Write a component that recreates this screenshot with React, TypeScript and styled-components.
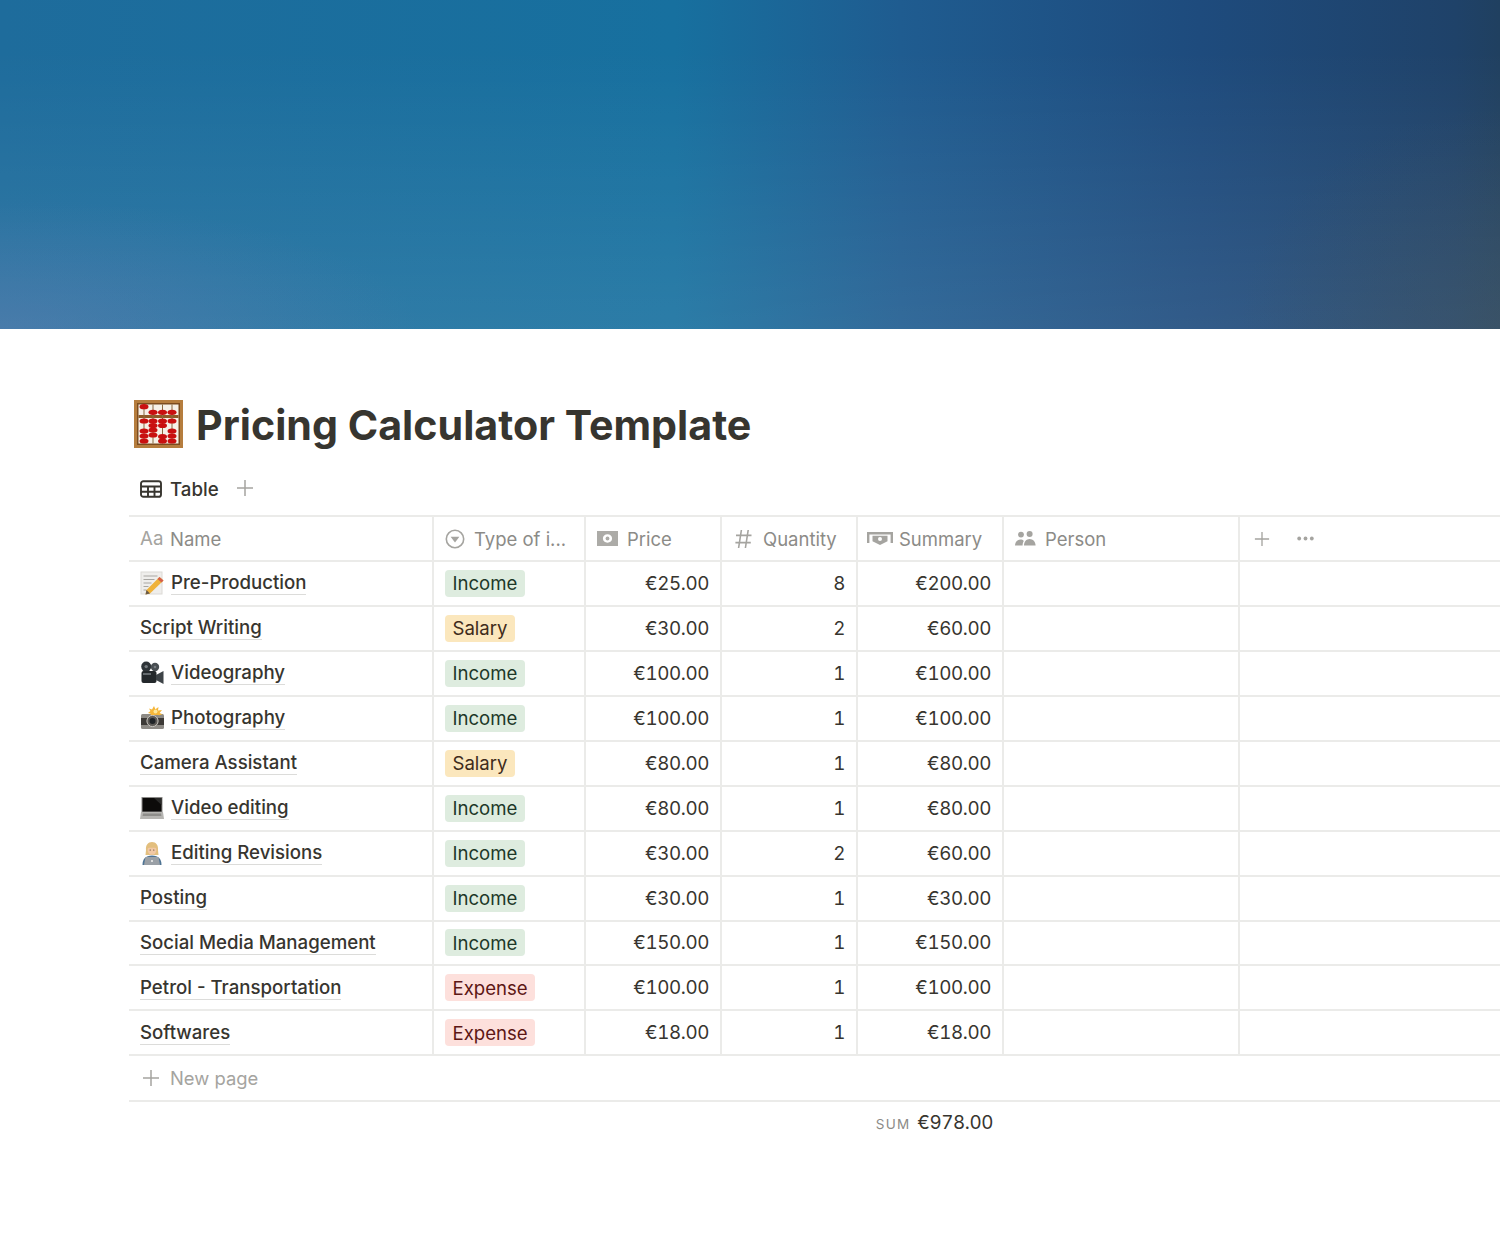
import React from 'react'
import styled, { createGlobalStyle } from 'styled-components'

const GlobalStyle = createGlobalStyle`
  html, body {
    margin: 0;
    padding: 0;
    background: #fff;
  }
  body {
    font-family: Inter, "Noto Sans", "Liberation Sans", sans-serif;
    color: #37352f;
    overflow: hidden;
  }
  * {
    box-sizing: border-box;
  }
`

const COLUMNS = '305px 152px 136px 136px 146px 236px 1fr'
const LINE = '#ebebe9'

const Page = styled.div`
  width: 1500px;
  height: 1249px;
  overflow: hidden;
`

const Cover = styled.div`
  height: 329px;
  background:
    radial-gradient(ellipse 420px 130px at 0% 100%, rgba(104, 126, 178, 0.42), transparent),
    radial-gradient(ellipse 260px 220px at 100% 100%, rgba(66, 84, 92, 0.4), transparent),
    linear-gradient(to bottom, rgba(255, 255, 255, 0) 15%, rgba(255, 255, 255, 0.09) 100%),
    linear-gradient(to right, #1e6c9c 0%, #17709f 45%, #1f5c90 60%, #1e4b7d 80%, #1f4269 97%, #204060 100%);
`

const Content = styled.div`
  padding: 66px 0 0 129px;
`

const TitleRow = styled.div`
  display: flex;
  align-items: center;
  gap: 13px;
  height: 60px;
  padding-left: 5px;
`

const EmojiBox = styled.span`
  display: flex;
  margin-bottom: 3px;
`

const Title = styled.h1`
  margin: 0;
  font-size: 41.2px;
  line-height: 60px;
  font-weight: 700;
  color: #37352f;
`

const TabBar = styled.div`
  display: flex;
  align-items: center;
  height: 60px;
  padding: 8px 0 0 11px;
`

const TabLabel = styled.span`
  margin-left: 8px;
  font-size: 18.7px;
  font-weight: 500;
  color: #37352f;
`

const TabAdd = styled.span`
  display: flex;
  margin-left: 17px;
  margin-top: -3px;
`

const Row = styled.div`
  display: grid;
  grid-template-columns: ${COLUMNS};
  height: 44.95px;
  border-bottom: 2px solid ${LINE};
`

const HeaderRow = styled(Row)`
  height: 47px;
  border-top: 2px solid ${LINE};
`

const HeadCell = styled.div<{ $tight?: boolean }>`
  display: flex;
  align-items: center;
  gap: ${({ $tight }) => ($tight ? 6 : 9)}px;
  padding-left: ${({ $tight }) => ($tight ? 9 : 11)}px;
  font-size: 18.5px;
  color: #8c8b87;
  border-right: 2px solid ${LINE};
`

const ActionsCell = styled.div`
  display: flex;
  align-items: center;
  gap: 27px;
  padding-left: 14px;
`

const IconSlot = styled.span<{ $width?: number }>`
  display: flex;
  flex: none;
  align-items: center;
  justify-content: center;
  width: ${({ $width }) => ($width ? `${$width}px` : 'auto')};
`

const NameCell = styled.div`
  display: flex;
  align-items: center;
  gap: 7px;
  padding-left: 11px;
  border-right: 2px solid ${LINE};
`

const NameText = styled.span`
  font-size: 18.65px;
  font-weight: 500;
  line-height: 23px;
  color: #37352f;
  border-bottom: 1px solid #dcdcda;
`

const TagCell = styled.div`
  display: flex;
  align-items: center;
  padding-left: 11px;
  border-right: 2px solid ${LINE};
`

const tagColors = {
  Income: { bg: '#deecdf', fg: '#1d3829' },
  Salary: { bg: '#fbe7bd', fg: '#402c1b' },
  Expense: { bg: '#fde0dc', fg: '#5d1715' },
}

type TagKind = keyof typeof tagColors

const Tag = styled.span<{ $kind: TagKind }>`
  display: inline-flex;
  align-items: center;
  height: 27px;
  padding: 0 7.5px;
  border-radius: 4px;
  font-size: 18.6px;
  background: ${({ $kind }) => tagColors[$kind].bg};
  color: ${({ $kind }) => tagColors[$kind].fg};
`

const NumberCell = styled.div`
  display: flex;
  align-items: center;
  justify-content: flex-end;
  padding-right: 11px;
  font-size: 18.8px;
  letter-spacing: -0.4px;
  font-variant-numeric: tabular-nums;
  color: #37352f;
  border-right: 2px solid ${LINE};
`

const EmptyCell = styled.div<{ $last?: boolean }>`
  border-right: ${({ $last }) => ($last ? 'none' : `2px solid ${LINE}`)};
`

const NewPageRow = styled.div`
  display: flex;
  align-items: center;
  gap: 10px;
  height: 46px;
  padding-left: 13px;
  font-size: 18.4px;
  color: #a5a4a0;
  border-bottom: 2px solid ${LINE};
`

const SumRow = styled.div`
  display: flex;
  align-items: baseline;
  justify-content: flex-end;
  gap: 7px;
  width: 864px;
  padding-top: 9px;
`

const SumLabel = styled.span`
  font-size: 13.5px;
  letter-spacing: 1.2px;
  color: #8c8b87;
`

const SumValue = styled.span`
  font-size: 18.8px;
  letter-spacing: -0.4px;
  font-variant-numeric: tabular-nums;
  color: #37352f;
`

const TextIcon = styled.span`
  font-size: 18.7px;
  color: #a5a4a0;
  width: 21px;
`

const PlusIcon = ({ size = 18, color = '#a5a4a0' }: { size?: number; color?: string }) => (
  <svg width={size} height={size} viewBox="0 0 18 18" fill="none" stroke={color} strokeWidth="1.5">
    <path d="M9 1v16M1 9h16" />
  </svg>
)

const TableIcon = () => (
  <svg width="22" height="18" viewBox="0 0 22 18" fill="none" stroke="#37352f" strokeWidth="1.9">
    <rect x="1" y="1.200" width="20" height="15.600" rx="2.400" />
    <path d="M1 6.500h20M1 11.700h20M8 6.500v10M14.500 6.500v10" />
  </svg>
)

const SelectIcon = () => (
  <svg width="20" height="20" viewBox="0 0 20 20" fill="none">
    <circle cx="10" cy="10" r="8.700" stroke="#a5a4a0" strokeWidth="1.600" />
    <path d="M5.600 7.800h8.800L10 13.600z" fill="#a5a4a0" />
  </svg>
)

const PriceIcon = () => (
  <svg width="21" height="15" viewBox="0 0 21 15">
    <path
      fillRule="evenodd"
      fill="#acaba7"
      d="M0 0h21v15H0zM10.500 3.300c-2.600 0-4.600 1.900-4.600 4.200s2 4.200 4.600 4.200 4.600-1.900 4.600-4.200-2-4.200-4.600-4.200z"
    />
    <circle cx="10.500" cy="7.500" r="1.900" fill="#acaba7" />
  </svg>
)

const HashIcon = () => (
  <svg width="17" height="20" viewBox="0 0 17 20" fill="none" stroke="#a5a4a0" strokeWidth="1.600">
    <path d="M6.400 1 3.600 19M13.200 1l-2.800 18M1 6.400h15.500M.4 13.600h15.400" />
  </svg>
)

const SummaryIcon = () => (
  <svg width="26" height="14" viewBox="0 0 26 14">
    <path fill="#a5a4a0" d="M0 0h26v2.400H0zM0 2h2.400v9H0zM23.600 2H26v9h-2.400z" />
    <path
      fillRule="evenodd"
      fill="#a5a4a0"
      d="M5.500 3.800h15v5.400L13 13 5.500 9.200zM13 5a2 2 0 1 0 0 4 2 2 0 0 0 0-4z"
    />
  </svg>
)

const PersonIcon = () => (
  <svg width="21" height="15" viewBox="0 0 21 15" fill="#a5a4a0">
    <circle cx="6" cy="3.600" r="2.900" />
    <circle cx="14.600" cy="3" r="3" />
    <path d="M0 14.600c0-3.600 2.400-6 5.400-6 1.500 0 2.600.5 3.400 1.300-.8 1.200-1.200 2.800-1.200 4.700zM9 14.600c0-3.800 2.400-6.600 5.600-6.600s6 2.800 6 6.600z" />
  </svg>
)

const DotsIcon = () => (
  <svg width="17" height="5" viewBox="0 0 17 5" fill="#a5a4a0">
    <circle cx="2.200" cy="2.500" r="1.900" />
    <circle cx="8.500" cy="2.500" r="1.900" />
    <circle cx="14.800" cy="2.500" r="1.900" />
  </svg>
)

const RODS = [10, 19, 28.5, 38]

// [rod index, bead y] for each red bead of the abacus
const BEADS: [number, number][] = [
  [0, 6.700], [1, 12.300], [2, 12.300], [3, 12.300],
  [0, 21], [1, 21], [2, 21], [3, 21],
  [1, 25.500], [2, 25.500],
  [0, 31], [1, 30], [3, 31],
  [0, 36], [1, 35], [2, 36.500], [3, 36],
  [0, 41], [2, 41], [3, 41],
]

const AbacusEmoji = () => (
  <svg width="49" height="48" viewBox="0 0 49 48">
    <rect width="49" height="48" fill="#b57d3e" />
    <rect x="3" y="3" width="43" height="42" fill="#7c4c1f" />
    <rect x="4.500" y="4.500" width="40" height="39" fill="#f6f1e8" />
    <rect x="4.500" y="15" width="40" height="3" fill="#8e5a26" />
    {RODS.map((x) => (
      <rect key={x} x={x - 0.5} y="4.500" width="1" height="39" fill="#8a6a40" />
    ))}
    {BEADS.map(([rod, y]) => (
      <ellipse key={`${rod}-${y}`} cx={RODS[rod]} cy={y} rx="4.500" ry="2.600" fill="#c91010" />
    ))}
  </svg>
)

const MemoEmoji = () => (
  <svg width="24" height="24" viewBox="0 0 24 24">
    <rect x="1" y="1" width="21" height="22" fill="#efeeec" stroke="#dcdad6" />
    <path d="M3.500 5h14M3.500 8.500h11M3.500 12h8M3.500 15.500h5M3.500 19h3" stroke="#a8a6a2" strokeWidth="1" />
    <path d="M19.500 6 23.500 9.500 10 22.500l-4.500 1 1-4.500z" fill="#efb23a" />
    <path d="M19.500 6 23.500 9.500l-2 2-4-3.500z" fill="#d5604a" />
    <path d="M6.500 19l3.500 3.500-4.500 1z" fill="#6a5a48" />
  </svg>
)

const MovieCameraEmoji = () => (
  <svg width="24" height="24" viewBox="0 0 24 24">
    <circle cx="6.200" cy="5.600" r="5" fill="#2e3438" />
    <circle cx="15" cy="6" r="4.200" fill="#484e52" />
    <circle cx="6.200" cy="5.600" r="1.700" fill="#767c80" />
    <circle cx="15" cy="6" r="1.300" fill="#767c80" />
    <rect x="1.500" y="10" width="15" height="12" rx="2" fill="#23282b" />
    <path d="M16 14l7.500-4v13L16 19z" fill="#3d4347" />
    <rect x="3" y="12" width="8" height="2" fill="#646a6e" />
  </svg>
)

const FlashCameraEmoji = () => (
  <svg width="24" height="24" viewBox="0 0 24 24">
    <rect x="1" y="8" width="23" height="15" rx="1.500" fill="#8d8a85" />
    <rect x="1" y="12" width="23" height="7" fill="#3d3a37" />
    <circle cx="12.500" cy="15" r="5.600" fill="#5d5a56" stroke="#c9c6c0" strokeWidth="1" />
    <circle cx="12.500" cy="15" r="3" fill="#1f2327" />
    <path d="M14 0l1.400 3.200L18.500.9l-.5 3.600 4-.6-2.400 3 3 1.400-3.400 1-1.200-.3H11l-.8-1.400L8 7l2.400-2L9 2.400l3 1z" fill="#f5b63a" />
    <circle cx="15.500" cy="5.500" r="2" fill="#fde79a" />
  </svg>
)

const LaptopEmoji = () => (
  <svg width="24" height="24" viewBox="0 0 24 24">
    <path d="M1.500 1h21v15h-21z" fill="#8b8a88" />
    <path d="M2.500 2h19v13.500h-19z" fill="#0c0b0a" />
    <path d="M14 2h7.500v7z" fill="#2a2a29" />
    <path d="M1 16h22l1 7H0z" fill="#b6b5b2" />
    <path d="M3 17.500h18l.4 2.600H2.600z" fill="#8e8d8a" />
  </svg>
)

const TechnologistEmoji = () => (
  <svg width="24" height="24" viewBox="0 0 24 24">
    <path d="M6 9c-.5-5 2-8 6-8s6.500 3 6 8l.5 5h-13z" fill="#e3bf7e" />
    <ellipse cx="12" cy="9" rx="4.400" ry="4.800" fill="#f2c9a5" />
    <path d="M7.200 7c2-.3 6.500-.3 9.600 0 0-3-2-4.500-4.800-4.500S7.200 4 7.200 7z" fill="#e3bf7e" />
    <circle cx="10.200" cy="9" r=".6" fill="#4a3526" />
    <circle cx="13.800" cy="9" r=".6" fill="#4a3526" />
    <path d="M2.500 24c0-6 3-9.500 9.500-9.500s9.500 3.500 9.500 9.500z" fill="#4f7494" />
    <path d="M5.500 16h13l1.500 8H4z" fill="#9aa0a6" />
    <circle cx="12" cy="20" r="1" fill="#f0f0ee" />
  </svg>
)

type Item = {
  name: string
  emoji?: React.ReactNode
  kind: TagKind
  price: string
  quantity: number
  summary: string
}

const items: Item[] = [
  { name: 'Pre-Production', emoji: <MemoEmoji />, kind: 'Income', price: '€25.00', quantity: 8, summary: '€200.00' },
  { name: 'Script Writing', kind: 'Salary', price: '€30.00', quantity: 2, summary: '€60.00' },
  { name: 'Videography', emoji: <MovieCameraEmoji />, kind: 'Income', price: '€100.00', quantity: 1, summary: '€100.00' },
  { name: 'Photography', emoji: <FlashCameraEmoji />, kind: 'Income', price: '€100.00', quantity: 1, summary: '€100.00' },
  { name: 'Camera Assistant', kind: 'Salary', price: '€80.00', quantity: 1, summary: '€80.00' },
  { name: 'Video editing', emoji: <LaptopEmoji />, kind: 'Income', price: '€80.00', quantity: 1, summary: '€80.00' },
  { name: 'Editing Revisions', emoji: <TechnologistEmoji />, kind: 'Income', price: '€30.00', quantity: 2, summary: '€60.00' },
  { name: 'Posting', kind: 'Income', price: '€30.00', quantity: 1, summary: '€30.00' },
  { name: 'Social Media Management', kind: 'Income', price: '€150.00', quantity: 1, summary: '€150.00' },
  { name: 'Petrol - Transportation', kind: 'Expense', price: '€100.00', quantity: 1, summary: '€100.00' },
  { name: 'Softwares', kind: 'Expense', price: '€18.00', quantity: 1, summary: '€18.00' },
]

const App = () => (
  <Page>
    <GlobalStyle />
    <Cover />
    <Content>
      <TitleRow>
        <EmojiBox>
          <AbacusEmoji />
        </EmojiBox>
        <Title>Pricing Calculator Template</Title>
      </TitleRow>
      <TabBar>
        <TableIcon />
        <TabLabel>Table</TabLabel>
        <TabAdd>
          <PlusIcon />
        </TabAdd>
      </TabBar>
      <HeaderRow>
        <HeadCell>
          <TextIcon>Aa</TextIcon>
          Name
        </HeadCell>
        <HeadCell>
          <IconSlot>
            <SelectIcon />
          </IconSlot>
          Type of i...
        </HeadCell>
        <HeadCell>
          <IconSlot>
            <PriceIcon />
          </IconSlot>
          Price
        </HeadCell>
        <HeadCell>
          <IconSlot $width={21}>
            <HashIcon />
          </IconSlot>
          Quantity
        </HeadCell>
        <HeadCell $tight>
          <IconSlot>
            <SummaryIcon />
          </IconSlot>
          Summary
        </HeadCell>
        <HeadCell>
          <IconSlot>
            <PersonIcon />
          </IconSlot>
          Person
        </HeadCell>
        <ActionsCell>
          <PlusIcon size={16} />
          <DotsIcon />
        </ActionsCell>
      </HeaderRow>
      {items.map((item) => (
        <Row key={item.name}>
          <NameCell>
            {item.emoji && <IconSlot>{item.emoji}</IconSlot>}
            <NameText>{item.name}</NameText>
          </NameCell>
          <TagCell>
            <Tag $kind={item.kind}>{item.kind}</Tag>
          </TagCell>
          <NumberCell>{item.price}</NumberCell>
          <NumberCell>{item.quantity}</NumberCell>
          <NumberCell>{item.summary}</NumberCell>
          <EmptyCell />
          <EmptyCell $last />
        </Row>
      ))}
      <NewPageRow>
        <PlusIcon />
        New page
      </NewPageRow>
      <SumRow>
        <SumLabel>SUM</SumLabel>
        <SumValue>€978.00</SumValue>
      </SumRow>
    </Content>
  </Page>
)

export default App
